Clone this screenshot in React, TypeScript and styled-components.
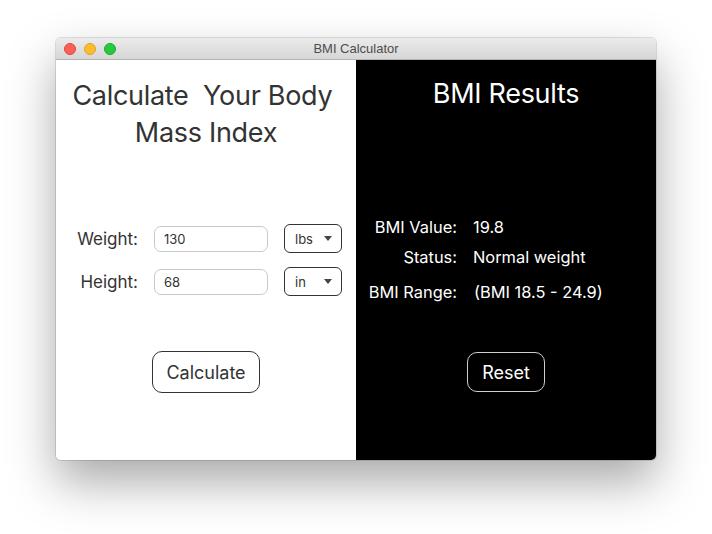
import React from "react";
import styled, { createGlobalStyle } from "styled-components";

const Global = createGlobalStyle`
  html, body { margin: 0; padding: 0; background: #ffffff; }
  body { width: 712px; height: 534px; overflow: hidden; font-family: Inter, "Liberation Sans", sans-serif; }
  #root { width: 712px; height: 534px; }
  * { box-sizing: border-box; }
`;

const Stage = styled.div`
  width: 712px;
  height: 534px;
  padding: 38px 0 0 56px;
`;

const Window = styled.div`
  width: 600px;
  height: 422px;
  border-radius: 5px;
  overflow: hidden;
  display: flex;
  flex-direction: column;
  box-shadow: 0 0 0 1px rgba(0, 0, 0, 0.12), 0 22px 48px rgba(0, 0, 0, 0.34);
`;

const TitleBar = styled.div`
  height: 22px;
  flex: none;
  display: flex;
  align-items: center;
  padding-left: 8px;
  position: relative;
  background: linear-gradient(#ebebeb, #d6d6d6);
  border-bottom: 1px solid #b4b4b4;
`;

const Lights = styled.div`
  display: flex;
  gap: 8px;
`;

const Light = styled.span<{ $bg: string; $bd: string }>`
  width: 12px;
  height: 12px;
  border-radius: 50%;
  background: ${(p) => p.$bg};
  border: 0.5px solid ${(p) => p.$bd};
`;

const Title = styled.div`
  position: absolute;
  left: 0;
  right: 0;
  top: 0;
  bottom: 0;
  display: flex;
  align-items: center;
  justify-content: center;
  font-family: "Liberation Sans", Arial, sans-serif;
  font-size: 13px;
  color: #4d4d4d;
  pointer-events: none;
`;

const Body = styled.div`
  flex: 1;
  display: flex;
`;

const Panel = styled.div<{ $dark?: boolean }>`
  width: 300px;
  height: 100%;
  background: ${(p) => (p.$dark ? "#000000" : "#ffffff")};
  color: ${(p) => (p.$dark ? "#ffffff" : "#333333")};
  display: flex;
  flex-direction: column;
  align-items: center;
`;

const Heading = styled.h1`
  margin: 17px 0 0;
  font-weight: 400;
  font-size: 27px;
  line-height: 37px;
  text-align: center;
  letter-spacing: -0.3px;
  white-space: pre;
  color: #333333;
`;

const ResultsHeading = styled.h2`
  margin: 15px 0 0;
  font-weight: 400;
  font-size: 27px;
  line-height: 37px;
  letter-spacing: -0.3px;
  color: #ffffff;
`;

const Form = styled.div`
  margin-top: 73px;
  width: 100%;
  display: grid;
  grid-template-columns: 81px 114px 58px;
  column-gap: 16px;
  row-gap: 14px;
  padding-left: 1px;
  align-items: center;
`;

const Label = styled.label`
  font-size: 17px;
  text-align: right;
  color: #333333;
`;

const TextInput = styled.div`
  height: 26px;
  border: 1px solid #c9c9c9;
  border-radius: 7px;
  display: flex;
  align-items: center;
  padding-left: 9px;
  font-size: 13px;
  color: #333333;
`;

const Select = styled.div`
  height: 29px;
  border: 1px solid #333333;
  border-radius: 6px;
  display: flex;
  align-items: center;
  justify-content: space-between;
  padding: 0 9px 0 10px;
  font-size: 13px;
  color: #333333;
`;

const Arrow = styled.span`
  width: 0;
  height: 0;
  border-left: 4.5px solid transparent;
  border-right: 4.5px solid transparent;
  border-top: 5px solid #444444;
`;

const Button = styled.button<{ $dark?: boolean }>`
  font-family: inherit;
  font-size: 18px;
  background: transparent;
  color: ${(p) => (p.$dark ? "#ffffff" : "#333333")};
  border: 1px solid ${(p) => (p.$dark ? "#cfcfcf" : "#333333")};
  border-radius: 10px;
  padding: 0;
  cursor: pointer;
`;

const CalcButton = styled(Button)`
  margin-top: 55px;
  width: 108px;
  height: 42px;
`;

const ResetButton = styled(Button)`
  margin-top: 50px;
  width: 78px;
  height: 40px;
`;

const Results = styled.div`
  margin-top: 105px;
  width: 100%;
  display: grid;
  grid-template-columns: 101px auto;
  column-gap: 16px;
  align-items: center;
`;

const RLabel = styled.div<{ $mt?: number }>`
  font-size: 16.4px;
  text-align: right;
  margin-top: ${(p) => p.$mt ?? 0}px;
`;

const RValue = styled.div<{ $mt?: number; $indent?: number }>`
  font-size: 16.4px;
  margin-top: ${(p) => p.$mt ?? 0}px;
  padding-left: ${(p) => p.$indent ?? 0}px;
`;

export default function App() {
  return (
    <>
      <Global />
      <Stage>
        <Window>
          <TitleBar>
            <Lights>
              <Light $bg="#fc5f57" $bd="#df4640" />
              <Light $bg="#fdbc2e" $bd="#dea123" />
              <Light $bg="#28c840" $bd="#1aab29" />
            </Lights>
            <Title>BMI Calculator</Title>
          </TitleBar>
          <Body>
            <Panel>
              <Heading>{"Calculate  Your Body \nMass Index"}</Heading>
              <Form>
                <Label>Weight:</Label>
                <TextInput>130</TextInput>
                <Select>
                  lbs
                  <Arrow />
                </Select>
                <Label>Height:</Label>
                <TextInput>68</TextInput>
                <Select>
                  in
                  <Arrow />
                </Select>
              </Form>
              <CalcButton>Calculate</CalcButton>
            </Panel>
            <Panel $dark>
              <ResultsHeading>BMI Results</ResultsHeading>
              <Results>
                <RLabel>BMI Value:</RLabel>
                <RValue>19.8</RValue>
                <RLabel $mt={10}>Status:</RLabel>
                <RValue $mt={10}>Normal weight</RValue>
                <RLabel $mt={15}>BMI Range:</RLabel>
                <RValue $mt={15} $indent={1}>(BMI 18.5 - 24.9)</RValue>
              </Results>
              <ResetButton $dark>Reset</ResetButton>
            </Panel>
          </Body>
        </Window>
      </Stage>
    </>
  );
}
